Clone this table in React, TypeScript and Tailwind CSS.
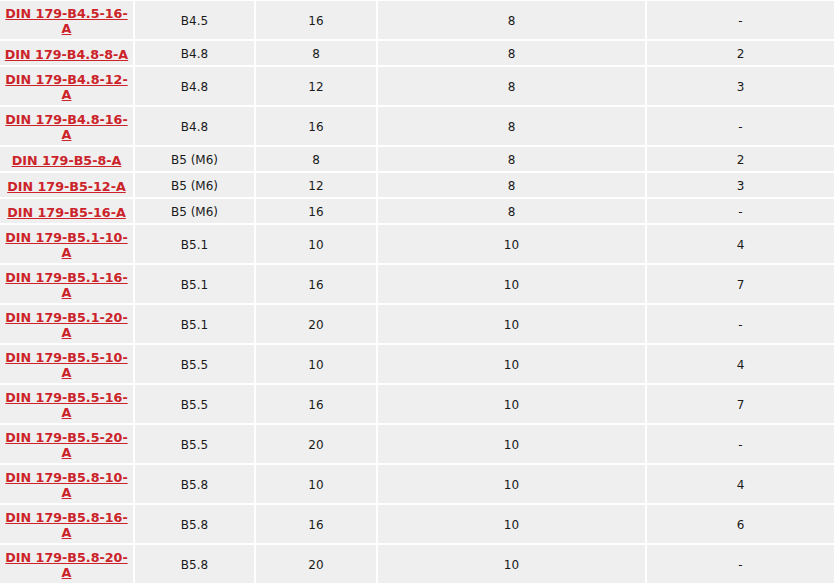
import React from 'react';

type Row = { part: string; size: string; len: string; pack: string; qty: string };

const rows: Row[] = [
  { part: 'DIN 179-B4.5-16-A', size: 'B4.5', len: '16', pack: '8', qty: '-' },
  { part: 'DIN 179-B4.8-8-A', size: 'B4.8', len: '8', pack: '8', qty: '2' },
  { part: 'DIN 179-B4.8-12-A', size: 'B4.8', len: '12', pack: '8', qty: '3' },
  { part: 'DIN 179-B4.8-16-A', size: 'B4.8', len: '16', pack: '8', qty: '-' },
  { part: 'DIN 179-B5-8-A', size: 'B5 (M6)', len: '8', pack: '8', qty: '2' },
  { part: 'DIN 179-B5-12-A', size: 'B5 (M6)', len: '12', pack: '8', qty: '3' },
  { part: 'DIN 179-B5-16-A', size: 'B5 (M6)', len: '16', pack: '8', qty: '-' },
  { part: 'DIN 179-B5.1-10-A', size: 'B5.1', len: '10', pack: '10', qty: '4' },
  { part: 'DIN 179-B5.1-16-A', size: 'B5.1', len: '16', pack: '10', qty: '7' },
  { part: 'DIN 179-B5.1-20-A', size: 'B5.1', len: '20', pack: '10', qty: '-' },
  { part: 'DIN 179-B5.5-10-A', size: 'B5.5', len: '10', pack: '10', qty: '4' },
  { part: 'DIN 179-B5.5-16-A', size: 'B5.5', len: '16', pack: '10', qty: '7' },
  { part: 'DIN 179-B5.5-20-A', size: 'B5.5', len: '20', pack: '10', qty: '-' },
  { part: 'DIN 179-B5.8-10-A', size: 'B5.8', len: '10', pack: '10', qty: '4' },
  { part: 'DIN 179-B5.8-16-A', size: 'B5.8', len: '16', pack: '10', qty: '6' },
  { part: 'DIN 179-B5.8-20-A', size: 'B5.8', len: '20', pack: '10', qty: '-' },
];

const cell = 'h-[24px] bg-[#efefef] px-[4px] pt-[5px] pb-[3px] text-center align-middle leading-[15px]';

export default function App() {
  return (
    <div className="w-[834px] h-[585px] overflow-hidden bg-white font-['DejaVu_Sans',Verdana,sans-serif] text-[12px] text-[#1a1a1a]">
      <table className="-mt-px -ml-[2px] w-[836px] table-fixed border-separate border-spacing-[2px]">
        <colgroup>
          <col className="w-[133px]" />
          <col className="w-[119px]" />
          <col className="w-[120px]" />
          <col className="w-[267px]" />
          <col className="w-[187px]" />
        </colgroup>
        <tbody>
          {rows.map((r) => (
            <tr key={r.part}>
              <td className={cell}>
                <a href="#" className="block text-[12.7px] leading-[15px] font-bold text-[#cc2229] underline">
                  {r.part}
                </a>
              </td>
              <td className={cell}>{r.size}</td>
              <td className={cell}>{r.len}</td>
              <td className={cell}>{r.pack}</td>
              <td className={cell}>{r.qty}</td>
            </tr>
          ))}
        </tbody>
      </table>
    </div>
  );
}
